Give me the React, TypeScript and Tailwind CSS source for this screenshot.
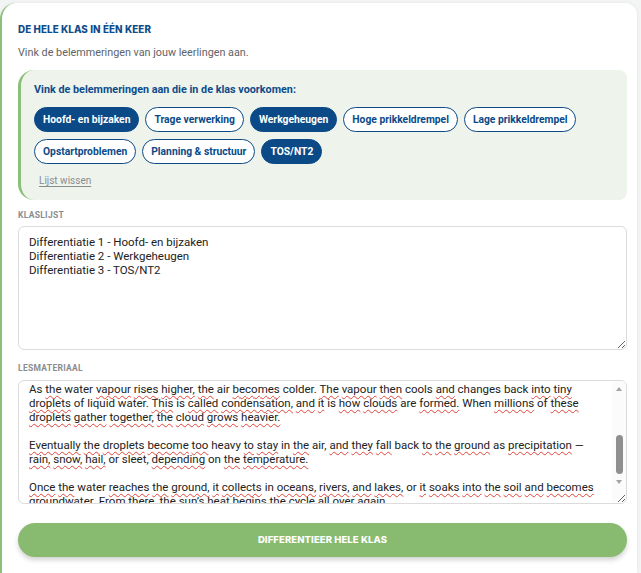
import { useEffect, useRef, useState } from 'react';

const options = [
  'Hoofd- en bijzaken',
  'Trage verwerking',
  'Werkgeheugen',
  'Hoge prikkeldrempel',
  'Lage prikkeldrempel',
  'Opstartproblemen',
  'Planning & structuur',
  'TOS/NT2',
];

// words the (Dutch) spell checker flags in the English text
const flagged = new Set([
  'the', 'The', 'vapour', 'rises', 'higher', 'becomes', 'then', 'and', 'into', 'tiny',
  'droplets', 'This', 'condensation', 'how', 'clouds', 'formed', 'millions', 'these',
  'gather', 'together', 'cloud', 'grows', 'heavier', 'Eventually', 'become', 'too',
  'to', 'stay', 'they', 'fall', 'ground', 'precipitation', 'rain', 'snow', 'hail',
  'depending', 'temperature', 'Once', 'reaches', 'it', 'collects', 'oceans', 'rivers',
  'lakes', 'soaks', 'soil', 'groundwater', 'From', 'there', "sun's", 'heat', 'begins',
  'cycle', 'all', 'over', 'again', 'Water', 'Cycle', 'sun', 'heats', 'seas', 'turns',
  'invisible', 'gas', 'called', 'evaporation', 'Plants', 'also', 'release', 'leaves',
]);

const lesmateriaal = [
  'The Water Cycle',
  '',
  'The sun heats the water in oceans, seas, rivers and lakes. The water slowly turns into an invisible gas called water vapour. This is called evaporation.',
  '',
  'Plants also release water vapour through their leaves. Together with the water from the seas, the vapour rises up into the sky, where it is carried by the wind over long distances and across the land.',
  '',
  'As the water vapour rises higher, the air becomes colder. The vapour then cools and changes back into tiny droplets of liquid water. This is called condensation, and it is how clouds are formed. When millions of these droplets gather together, the cloud grows heavier.',
  '',
  'Eventually the droplets become too heavy to stay in the air, and they fall back to the ground as precipitation — rain, snow, hail, or sleet, depending on the temperature.',
  '',
  'Once the water reaches the ground, it collects in oceans, rivers, and lakes, or it soaks into the soil and becomes groundwater. From there, the sun’s heat begins the cycle all over again.',
];

function Paragraph({ text, pRef }: { text: string; pRef?: React.Ref<HTMLParagraphElement> }) {
  if (!text) return <div className="h-[14px]" />;
  const parts = text.split(/(\s+)/);
  return (
    <p ref={pRef}>
      {parts.map((p, i) => {
        const word = p.replace(/[.,—:]/g, '').replace('’', "'");
        if (flagged.has(word)) {
          return (
            <span key={i} className="underline decoration-wavy decoration-[#e0443a] decoration-[1px] underline-offset-[2px]">
              {p}
            </span>
          );
        }
        return <span key={i}>{p}</span>;
      })}
    </p>
  );
}

export default function App() {
  const [selected, setSelected] = useState<string[]>(['Hoofd- en bijzaken', 'Werkgeheugen', 'TOS/NT2']);
  const [thumb, setThumb] = useState({ top: 40, height: 36 });
  const scrollRef = useRef<HTMLDivElement>(null);
  const startRef = useRef<HTMLParagraphElement>(null);

  useEffect(() => {
    const box = scrollRef.current;
    if (box && startRef.current) {
      box.scrollTop = startRef.current.offsetTop - 1;
      const track = box.clientHeight - 42;
      setThumb({
        top: (box.scrollTop / box.scrollHeight) * track + 3,
        height: Math.max(20, (box.clientHeight / box.scrollHeight) * track),
      });
    }
  }, []);

  const toggle = (o: string) => {
    setSelected((s) => (s.includes(o) ? s.filter((x) => x !== o) : [...s, o]));
  };

  const klaslijst = selected
    .slice()
    .sort((a, b) => options.indexOf(a) - options.indexOf(b))
    .map((s, i) => `Differentiatie ${i + 1} - ${s}`)
    .join('\n');

  return (
    <div className="min-h-screen bg-[#f3f4f4] pt-[3px] font-['Roboto',sans-serif]">
      <div className="w-[637px] rounded-tl-2xl rounded-tr-xl border-l-[2px] border-[#8cc07a] bg-white pb-4 pl-4 pr-[10px] pt-[20px] shadow-[0_0_4px_rgba(0,0,0,0.06)]">
        <h2 className="font-['Inter',sans-serif] text-[9.8px] font-extrabold uppercase leading-[14px] tracking-[0.1px] text-[#0f4c8a]">
          De hele klas in één keer
        </h2>
        <p className="mt-[8px] text-[10.8px] leading-[16px] text-[#606468]">
          Vink de belemmeringen van jouw leerlingen aan.
        </p>

        <div className="mt-[9px] rounded-lg rounded-l-2xl border-l-[3px] border-[#8cc07a] bg-[#eef3ec] pb-[9px] pl-[13px] pr-3 pt-[13px]">
          <p className="text-[10.8px] font-bold leading-[14px] text-[#0f4c8a]">
            Vink de belemmeringen aan die in de klas voorkomen:
          </p>
          <div className="mt-[10px] flex flex-wrap gap-x-[6px] gap-y-[7px]">
            {options.map((o) => {
              const on = selected.includes(o);
              return (
                <button
                  key={o}
                  onClick={() => toggle(o)}
                  className={`h-[25px] rounded-full border-[1.5px] border-[#0b4a87] px-[8px] text-[10.3px] font-bold ${
                    on ? 'bg-[#0b4a87] text-white' : 'bg-white text-[#0b4a87]'
                  }`}
                >
                  {o}
                </button>
              );
            })}
          </div>
          <button
            onClick={() => setSelected([])}
            className="mt-[10px] pl-[5px] text-[10px] leading-[14px] text-[#8a8d90] underline underline-offset-2"
          >
            Lijst wissen
          </button>
        </div>

        <label className="mt-[10px] block text-[8.5px] font-bold uppercase leading-[10px] tracking-[0.3px] text-[#8a8d90]">
          Klaslijst
        </label>
        <textarea
          readOnly
          value={klaslijst}
          className="mt-[6px] block h-[124px] w-full resize-y rounded-md border border-[#dcdcdc] px-[10px] pb-[8px] pt-[8px] text-[11.5px] leading-[14px] text-[#222] outline-none"
        />

        <label className="mt-[13px] block text-[8.5px] font-bold uppercase leading-[10px] tracking-[0.3px] text-[#8a8d90]">
          Lesmateriaal
        </label>
        <div className="mt-[7px] flex h-[124px] w-full resize-y overflow-hidden rounded-md border border-[#dcdcdc]">
          <div
            ref={scrollRef}
            className="relative min-w-0 flex-1 overflow-y-hidden py-[8px] pl-[10px] pr-[6px] text-[11.5px] leading-[14px] text-[#222]"
          >
            {lesmateriaal.map((t, i) => (
              <Paragraph key={i} text={t} pRef={i === 6 ? startRef : undefined} />
            ))}
          </div>
          <div className="flex w-[14px] shrink-0 flex-col bg-[#fbfbfb]">
            <div className="flex h-[14px] items-center justify-center pt-[2px]">
              <div className="h-0 w-0 border-x-[3.5px] border-b-[4px] border-x-transparent border-b-[#a3a3a3]" />
            </div>
            <div className="flex-1">
              <div
                className="mx-auto w-[7px] rounded-full bg-[#8f8f8f]"
                style={{ marginTop: thumb.top, height: thumb.height }}
              />
            </div>
            <div className="flex h-[14px] items-center justify-center">
              <div className="h-0 w-0 border-x-[3.5px] border-t-[4px] border-x-transparent border-t-[#a3a3a3]" />
            </div>
            <div className="h-[14px]" />
          </div>
        </div>

        <button className="mt-[19px] h-[34px] w-full rounded-full bg-[#88bb6f] font-['Inter',sans-serif] text-[9.5px] font-extrabold uppercase tracking-[0.1px] text-white shadow-[0_3px_5px_rgba(0,0,0,0.18)]">
          Differentieer hele klas
        </button>
      </div>
    </div>
  );
}
